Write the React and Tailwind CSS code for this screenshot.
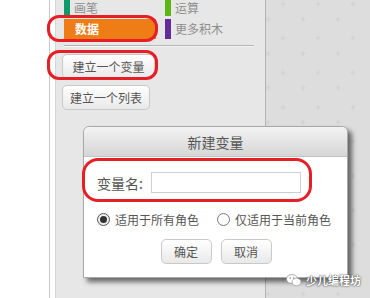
import React from 'react';

const font = { fontFamily: '"Noto Sans CJK SC", "Noto Sans", sans-serif' };

function Category({ color, label, selected }) {
    if (selected) {
        return (
            <div className="h-full w-[92px] bg-[#ee7d16] flex items-center pl-[11px] text-white font-bold text-[12px] leading-none">
                {label}
            </div>
        );
    }
    return (
        <div className="h-full flex items-center gap-[4px] text-[12px] leading-none text-[#8e8e8e]">
            <div className="w-[6px] h-full" style={{ background: color }} />
            <span>{label}</span>
        </div>
    );
}

function Button({ children, className = '' }) {
    return (
        <div className={`h-[25px] flex items-center justify-center rounded-[5px] border border-[#c9c9c9] bg-gradient-to-b from-[#ffffff] to-[#e9e9e9] text-[12px] text-[#555] leading-none ${className}`}>
            {children}
        </div>
    );
}

function Radio({ checked, label }) {
    return (
        <div className="flex items-center gap-[5px] text-[12px] text-[#555] leading-none">
            <div className={`w-[13px] h-[13px] rounded-full border flex items-center justify-center ${checked ? 'border-[#555] bg-[#eee]' : 'border-[#777] bg-white'}`}>
                {checked && <div className="w-[7px] h-[7px] rounded-full bg-[#333]" />}
            </div>
            <span>{label}</span>
        </div>
    );
}

function Grid() {
    return (
        <svg className="w-full h-full" xmlns="http://www.w3.org/2000/svg">
            <defs>
                <pattern id="plus" width="35" height="34.4" patternUnits="userSpaceOnUse" x="0" y="0">
                    <path d="M17 1.5v5M14.5 4h5" stroke="#cfd0cf" strokeWidth="1" />
                    <path d="M2 16.5v5M-0.5 19h5" stroke="#cfd0cf" strokeWidth="1" />
                </pattern>
            </defs>
            <rect width="100%" height="100%" fill="url(#plus)" />
        </svg>
    );
}

export default function App() {
    return (
        <div className="relative w-[370px] h-[298px] overflow-hidden flex bg-white" style={font}>
            {/* left stage strip */}
            <div className="w-[50px] h-full bg-white border-r border-[#c8c8c8]" />
            <div className="w-[5px] h-full bg-white" />

            {/* block palette */}
            <div className="w-[211px] h-full bg-[#e6e7e6] border-l border-[#d6d6d6] border-r border-r-[#b3b3b3] flex flex-col pl-[6px]">
                <div className="pl-[2px] grid grid-cols-[92px_1fr] grid-rows-[16px_20px] gap-x-[9px] gap-y-[3px]">
                    <Category color="#0e9a6c" label="画笔" />
                    <Category color="#5cb712" label="运算" />
                    <Category label="数据" selected />
                    <Category color="#632d99" label="更多积木" />
                </div>
                <div className="ml-[2px] mt-[6px] w-[190px] h-[2px] border-t border-[#b5b5b5] border-b border-b-[#f4f4f4]" />
                <div className="mt-[7px] flex flex-col gap-[6px]">
                    <Button className="w-[93px]">建立一个变量</Button>
                    <Button className="w-[88px]">建立一个列表</Button>
                </div>
            </div>

            {/* scripts area */}
            <div className="flex-1 h-full bg-[#dcdddc]">
                <Grid />
            </div>

            {/* annotations */}
            <div className="absolute left-[47px] top-[15px] w-[111px] h-[27px] border-[3px] border-[#e61e25] rounded-[12px]" />
            <div className="absolute left-[47px] top-[50px] w-[111px] h-[30px] border-[3px] border-[#e61e25] rounded-[12px]" />

            {/* dialog */}
            <div className="absolute left-[83px] top-[126px] w-[265px] h-[152px] bg-white border border-[#a9a9a9] rounded-t-[6px] shadow-[4px_4px_5px_rgba(0,0,0,0.55)] flex flex-col">
                <div className="h-[30px] rounded-t-[6px] bg-gradient-to-b from-[#f3f3f3] to-[#d6d6d6] border-b border-[#c4c4c4] flex items-center justify-center text-[14px] text-[#555] leading-none">
                    新建变量
                </div>
                <div className="flex items-center pl-[13px] mt-[15px]">
                    <span className="text-[14px] text-[#555] leading-none w-[54px]">变量名:</span>
                    <div className="w-[150px] h-[21px] border border-[#cfcfcf] bg-white" />
                </div>
                <div className="flex items-center pl-[13px] mt-[20px] gap-[18px]">
                    <Radio checked label="适用于所有角色" />
                    <Radio label="仅适用于当前角色" />
                </div>
                <div className="flex justify-center gap-[9px] mt-[13px] pl-[1px]">
                    <Button className="w-[51px]">确定</Button>
                    <Button className="w-[51px]">取消</Button>
                </div>
            </div>

            <div className="absolute left-[82px] top-[158px] w-[230px] h-[44px] border-[3px] border-[#e61e25] rounded-[16px]" />

            {/* watermark */}
            <div className="absolute left-[286px] top-[273px] flex items-center gap-[4px]">
                <svg width="16" height="14" viewBox="0 0 16 14">
                    <ellipse cx="6" cy="6" rx="5.5" ry="4.5" fill="#fff" stroke="#9a9a9a" strokeWidth="0.8" />
                    <ellipse cx="10.5" cy="9" rx="4.5" ry="3.8" fill="#fff" stroke="#9a9a9a" strokeWidth="0.8" />
                    <circle cx="4.2" cy="5" r="0.8" fill="#888" />
                    <circle cx="7.6" cy="5" r="0.8" fill="#888" />
                </svg>
                <span className="text-[11px] font-bold text-white leading-none [text-shadow:0_0_2px_#555,0_0_1px_#333]">少儿编程坊</span>
            </div>
        </div>
    );
}
